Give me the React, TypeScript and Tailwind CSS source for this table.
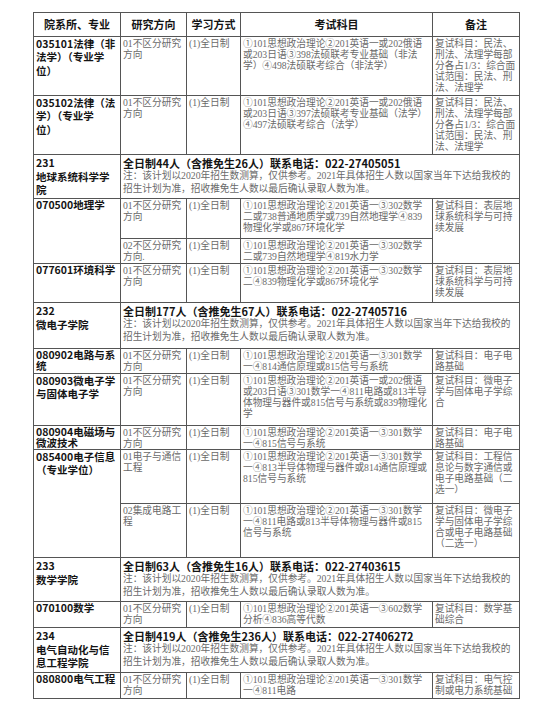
const serif = "font-['Liberation_Serif','Noto_Sans_CJK_SC',serif]";
const sans = "font-['Noto_Sans_CJK_SC','Liberation_Sans',sans-serif]";

const td = "border border-[#555] align-top px-[2px] overflow-hidden";
const grey = `${serif} text-[9.7px] leading-[11px] text-[#6a6a6a] whitespace-pre pt-[1px]`;
const bold = `${sans} text-[10.5px] font-bold text-[#141414] whitespace-pre`;

const NOTE =
  "注：该计划以2020年招生数测算，仅供参考。2021年具体招生人数以国家当年下达给我校的\n招生计划为准，招收推免生人数以最后确认录取人数为准。";

function Dept({ code, name, plan, h }: { code: string; name: string; plan: string; h: string }) {
  return (
    <tr className={h}>
      <td className={`${td} ${bold} leading-[13.5px] pt-[1px]`}>
        {code}
        {"\n"}
        {name}
      </td>
      <td colSpan={4} className={td}>
        <div className={`${sans} text-[11px] leading-[14px] font-bold text-[#141414] whitespace-pre pt-[1px]`}>{plan}</div>
        <div className={`${serif} text-[9.7px] leading-[12.5px] text-[#6a6a6a] whitespace-pre`}>{NOTE}</div>
      </td>
    </tr>
  );
}

function Major({
  name,
  dir = "01不区分研究\n方向",
  exam,
  note,
  h,
  lead = "leading-[12px]",
}: {
  name: string;
  dir?: string;
  exam: string;
  note: string;
  h: string;
  lead?: string;
}) {
  return (
    <tr className={h}>
      <td className={`${td} ${bold} ${lead}`}>{name}</td>
      <td className={`${td} ${grey}`}>{dir}</td>
      <td className={`${td} ${grey}`}>(1)全日制</td>
      <td className={`${td} ${grey}`}>{exam}</td>
      <td className={`${td} ${grey}`}>{note}</td>
    </tr>
  );
}

const LAW_NOTE = "复试科目：民法、\n刑法、法理学每部\n分各占1/3：综合面\n试范围：民法、刑\n法、法理学";
const GEO_NOTE = "复试科目：表层地\n球系统科学与可持\n续发展";

export default function App() {
  return (
    <div className="min-h-[709px] bg-white pt-[12px] pl-[33px]">
      <table className="table-fixed border-collapse w-[486px] border border-[#444]">
        <colgroup>
          <col className="w-[87px]" />
          <col className="w-[66px]" />
          <col className="w-[54px]" />
          <col className="w-[192px]" />
          <col className="w-[87px]" />
        </colgroup>
        <tbody>
          <tr className="h-[24px]">
            {["院系所、专业", "研究方向", "学习方式", "考试科目", "备注"].map((t) => (
              <td key={t} className={`border border-[#555] align-middle text-center ${sans} text-[11px] font-bold text-[#141414]`}>
                {t}
              </td>
            ))}
          </tr>

          <Major
            h="h-[59px]"
            lead="leading-[13.3px]"
            name={"035101法律（非\n法学）（专业学\n位）"}
            exam={"①101思想政治理论②201英语一或202俄语\n或203日语③398法硕联考专业基础（非法\n学）④498法硕联考综合（非法学）"}
            note={LAW_NOTE}
          />
          <Major
            h="h-[59px]"
            lead="leading-[13.3px]"
            name={"035102法律（法\n学）（专业学\n位）"}
            exam={"①101思想政治理论②201英语一或202俄语\n或203日语③397法硕联考专业基础（法学）\n④497法硕联考综合（法学）"}
            note={LAW_NOTE}
          />

          <Dept h="h-[44px]" code="231" name={"地球系统科学学\n院"} plan="全日制44人（含推免生26人）联系电话：022-27405051" />

          <tr className="h-[40px]">
            <td rowSpan={2} className={`${td} ${bold} leading-[12px]`}>070500地理学</td>
            <td className={`${td} ${grey}`}>{"01不区分研究\n方向"}</td>
            <td className={`${td} ${grey}`}>(1)全日制</td>
            <td className={`${td} ${grey}`}>
              {"①101思想政治理论②201英语一③302数学\n二或738普通地质学或739自然地理学④839\n物理化学或867环境化学"}
            </td>
            <td rowSpan={2} className={`${td} ${grey}`}>{GEO_NOTE}</td>
          </tr>
          <tr className="h-[25px]">
            <td className={`${td} ${grey}`}>{"02不区分研究\n方向."}</td>
            <td className={`${td} ${grey}`}>(1)全日制</td>
            <td className={`${td} ${grey}`}>{"①101思想政治理论②201英语一③302数学\n二或739自然地理学④819水力学"}</td>
          </tr>

          <Major
            h="h-[39px]"
            name="077601环境科学"
            exam={"①101思想政治理论②201英语一③302数学\n二④839物理化学或867环境化学"}
            note={GEO_NOTE}
          />

          <Dept h="h-[46px]" code="232" name="微电子学院" plan="全日制177人（含推免生67人）联系电话：022-27405716" />

          <Major
            h="h-[25px]"
            lead="leading-[11px]"
            name={"080902电路与系\n统"}
            exam={"①101思想政治理论②201英语一③301数学\n一④814通信原理或815信号与系统"}
            note={"复试科目：电子电\n路基础"}
          />
          <Major
            h="h-[52px]"
            lead="leading-[13.3px]"
            name={"080903微电子学\n与固体电子学"}
            exam={"①101思想政治理论②201英语一或202俄语\n或203日语③301数学一④811电路或813半导\n体物理与器件或815信号与系统或839物理化\n学"}
            note={"复试科目：微电子\n学与固体电子学综\n合"}
          />
          <Major
            h="h-[24px]"
            lead="leading-[11px]"
            name={"080904电磁场与\n微波技术"}
            exam={"①101思想政治理论②201英语一③301数学\n一④815信号与系统"}
            note={"复试科目：电子电\n路基础"}
          />

          <tr className="h-[54px]">
            <td rowSpan={2} className={`${td} ${bold} leading-[13px]`}>{"085400电子信息\n（专业学位）"}</td>
            <td className={`${td} ${grey}`}>{"01电子与通信\n工程"}</td>
            <td className={`${td} ${grey}`}>(1)全日制</td>
            <td className={`${td} ${grey}`}>
              {"①101思想政治理论②201英语一③301数学\n一④813半导体物理与器件或814通信原理或\n815信号与系统"}
            </td>
            <td className={`${td} ${grey}`}>{"复试科目：工程信\n息论与数字通信或\n电子电路基础（二\n选一）"}</td>
          </tr>
          <tr className="h-[54px]">
            <td className={`${td} ${grey}`}>{"02集成电路工\n程"}</td>
            <td className={`${td} ${grey}`}>(1)全日制</td>
            <td className={`${td} ${grey}`}>
              {"①101思想政治理论②201英语一③301数学\n一④811电路或813半导体物理与器件或815\n信号与系统"}
            </td>
            <td className={`${td} ${grey}`}>{"复试科目：微电子\n学与固体电子学综\n合或电子电路基础\n（二选一）"}</td>
          </tr>

          <Dept h="h-[44px]" code="233" name="数学学院" plan="全日制63人（含推免生16人）联系电话：022-27403615" />

          <Major
            h="h-[26px]"
            name="070100数学"
            exam={"①101思想政治理论②201英语一③602数学\n分析④836高等代数"}
            note={"复试科目：数学基\n础综合"}
          />

          <Dept h="h-[45px]" code="234" name={"电气自动化与信\n息工程学院"} plan="全日制419人（含推免生236人）联系电话：022-27406272" />

          <Major
            h="h-[26px]"
            name="080800电气工程"
            exam={"①101思想政治理论②201英语一③301数学\n一④811电路"}
            note={"复试科目：电气控\n制或电力系统基础"}
          />
        </tbody>
      </table>
    </div>
  );
}
